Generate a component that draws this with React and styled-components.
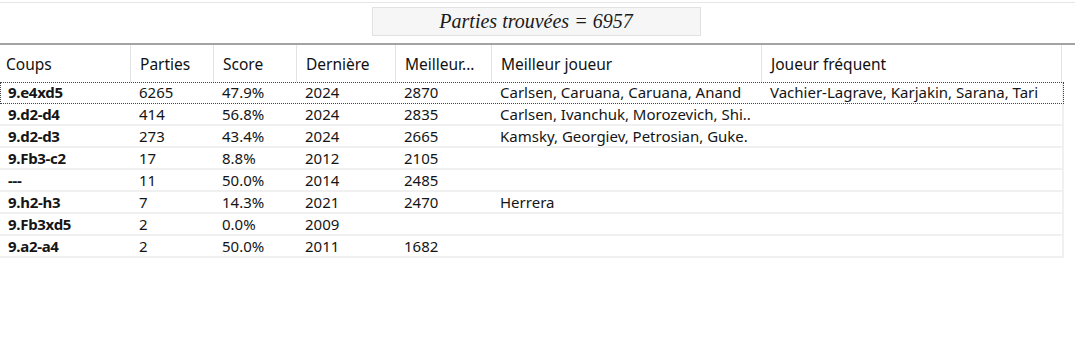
import React from 'react'
import styled, { createGlobalStyle } from 'styled-components'

const GlobalStyle = createGlobalStyle`
  body {
    margin: 0;
    background: #fff;
    font-family: "Noto Sans", "Open Sans", sans-serif;
  }
`

const COLS = '131px 83px 83px 99px 96px 270px 300px'

const columns = ['Coups', 'Parties', 'Score', 'Dernière', 'Meilleur...', 'Meilleur joueur', 'Joueur fréquent']

const rows = [
  ['9.e4xd5', '6265', '47.9%', '2024', '2870', 'Carlsen, Caruana, Caruana, Anand', 'Vachier-Lagrave, Karjakin, Sarana, Tari'],
  ['9.d2-d4', '414', '56.8%', '2024', '2835', 'Carlsen, Ivanchuk, Morozevich, Shi..', ''],
  ['9.d2-d3', '273', '43.4%', '2024', '2665', 'Kamsky, Georgiev, Petrosian, Guke.', ''],
  ['9.Fb3-c2', '17', '8.8%', '2012', '2105', '', ''],
  ['---', '11', '50.0%', '2014', '2485', '', ''],
  ['9.h2-h3', '7', '14.3%', '2021', '2470', 'Herrera', ''],
  ['9.Fb3xd5', '2', '0.0%', '2009', '', '', ''],
  ['9.a2-a4', '2', '50.0%', '2011', '1682', '', ''],
]

const Page = styled.div`
  width: 1075px;
  height: 364px;
  border-top: 1px solid #e6e6e6;
  margin-top: 2px;
  box-sizing: border-box;
`

const StatusBar = styled.div`
  display: flex;
  justify-content: center;
  padding: 4px 0 7px 0;
`

const StatusBox = styled.div`
  width: 329px;
  height: 29px;
  margin-left: -3px;
  box-sizing: border-box;
  background: #f6f6f6;
  border: 1px solid #e2e2e2;
  display: flex;
  align-items: center;
  justify-content: center;
  font-family: "Liberation Serif", serif;
  font-style: italic;
  font-size: 20px;
  color: #1a1a1a;
`

const Table = styled.div`
  border-top: 2px solid #a3a3a3;
`

const HeaderRow = styled.div`
  display: grid;
  grid-template-columns: ${COLS};
  height: 37px;
`

const HeaderCell = styled.div`
  display: flex;
  align-items: center;
  padding-left: ${({ $first }) => ($first ? '6px' : '9px')};
  border-right: 1px solid #e3e3e3;
  font-size: 15.5px;
  color: #111;
  white-space: nowrap;
  overflow: hidden;
`

const Row = styled.div`
  display: grid;
  grid-template-columns: ${COLS};
  height: 22px;
  box-sizing: border-box;
  border-bottom: 2px solid #f0f0f0;
  border-right: 2px solid #f0f0f0;
  width: 1064px;
  ${({ $focused }) =>
    $focused &&
    `
    border-bottom-color: transparent;
    outline: 1px dotted #444;
    outline-offset: -1px;
  `}
`

const Cell = styled.div`
  display: flex;
  align-items: center;
  padding-left: 8px;
  font-size: 15px;
  letter-spacing: ${({ $bold }) => ($bold ? '-0.3px' : '0')};
  font-weight: ${({ $bold }) => ($bold ? 700 : 400)};
  color: #151515;
  white-space: nowrap;
`

export default function App() {
  return (
    <Page>
      <GlobalStyle />
      <StatusBar>
        <StatusBox>Parties trouvées = 6957</StatusBox>
      </StatusBar>
      <Table>
        <HeaderRow>
          {columns.map((c, i) => (
            <HeaderCell key={c} $first={i === 0}>{c}</HeaderCell>
          ))}
        </HeaderRow>
        {rows.map((r, ri) => (
          <Row key={ri} $focused={ri === 0}>
            {r.map((v, ci) => (
              <Cell key={ci} $bold={ci === 0}>{v}</Cell>
            ))}
          </Row>
        ))}
      </Table>
    </Page>
  )
}
